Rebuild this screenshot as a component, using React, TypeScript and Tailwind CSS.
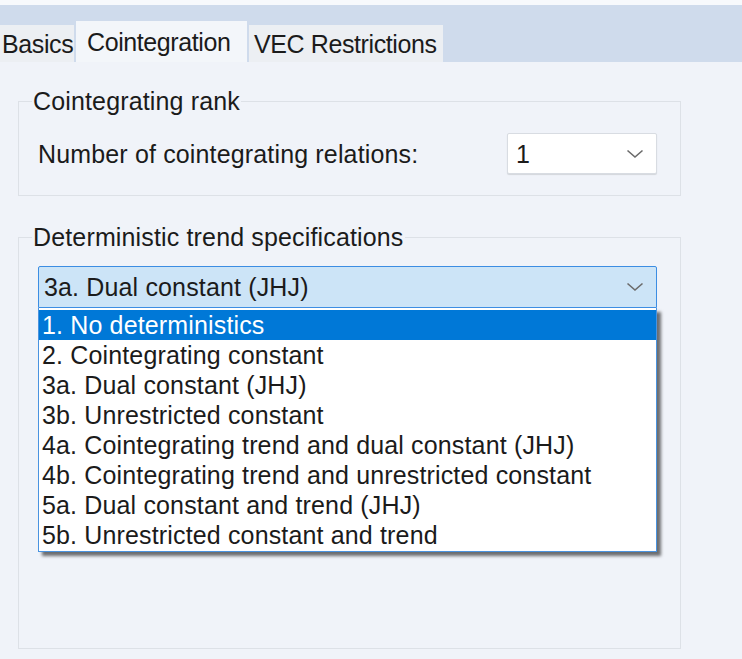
import { useState } from 'react';

const options = [
    '1. No deterministics',
    '2. Cointegrating constant',
    '3a. Dual constant (JHJ)',
    '3b. Unrestricted constant',
    '4a. Cointegrating trend and dual constant (JHJ)',
    '4b. Cointegrating trend and unrestricted constant',
    '5a. Dual constant and trend (JHJ)',
    '5b. Unrestricted constant and trend',
];

function Chevron() {
    return (
        <svg width="18" height="10" viewBox="0 0 18 10" className="shrink-0">
            <path d="M1.5 1.5 L9 8 L16.5 1.5" fill="none" stroke="#6b6b6b" strokeWidth="1.6" />
        </svg>
    );
}

export default function App() {
    const [active] = useState(0);

    return (
        <div
            className="w-[742px] h-[659px] overflow-hidden bg-[#f0f3f9] text-[#1b1b1b] text-[25px] leading-[28px] tracking-[0.15px] flex flex-col"
            style={{ fontFamily: '"Liberation Sans", Arial, sans-serif' }}
        >
            <div className="h-[5px] bg-[#f7f9fc]" />
            <div className="h-[57px] bg-[#cfdbec] flex items-end tracking-[-0.4px]">
                <div className="w-[74px] h-[37px] pl-[2px] bg-[#eceff3] flex items-center">Basics</div>
                <div className="w-[171px] h-[41px] ml-[2px] pl-[11px] bg-[#f3f6fa] flex items-center">Cointegration</div>
                <div className="w-[194px] h-[37px] ml-[2px] pl-[5px] bg-[#eceff3] flex items-center">VEC Restrictions</div>
            </div>

            <div className="pl-[18px] pt-[25px] w-[681px] flex flex-col">
                <fieldset className="border border-[#dde1e7] pl-[19px] pr-[23px] pt-[18px] pb-[21px]">
                    <legend className="-ml-[6px] px-[1px]">Cointegrating rank</legend>
                    <div className="flex items-center justify-between">
                        <span>Number of cointegrating relations:</span>
                        <div className="w-[150px] h-[41px] bg-white border border-[#d8dce2] rounded-[2px] shadow-[0_1px_1px_rgba(0,0,0,0.12)] flex items-center justify-between pl-[8px] pr-[12px]">
                            <span>1</span>
                            <Chevron />
                        </div>
                    </div>
                </fieldset>

                <fieldset className="mt-[27px] h-[426px] border border-[#dde1e7] pl-[19px] pr-[23px] pt-[15px]">
                    <legend className="-ml-[6px] px-[1px]">Deterministic trend specifications</legend>
                    <div className="relative">
                        <div className="h-[42px] bg-[#cce4f7] border border-[#3c8de3] rounded-t-[2px] flex items-center justify-between pl-[5px] pr-[12px]">
                            <span>3a. Dual constant (JHJ)</span>
                            <Chevron />
                        </div>
                        <div className="absolute left-0 right-0 top-[42px] bg-white border border-[#4a93e0] border-t-0 shadow-[4px_4px_3px_rgba(0,0,0,0.55)] pt-[2px] pb-[1px]">
                            {options.map((o, i) => (
                                <div
                                    key={o}
                                    className={
                                        i === active
                                            ? 'h-[30px] px-[3px] flex items-center bg-[#0078d7] text-white'
                                            : 'h-[30px] px-[3px] flex items-center'
                                    }
                                >
                                    {o}
                                </div>
                            ))}
                        </div>
                    </div>
                </fieldset>
            </div>
        </div>
    );
}
